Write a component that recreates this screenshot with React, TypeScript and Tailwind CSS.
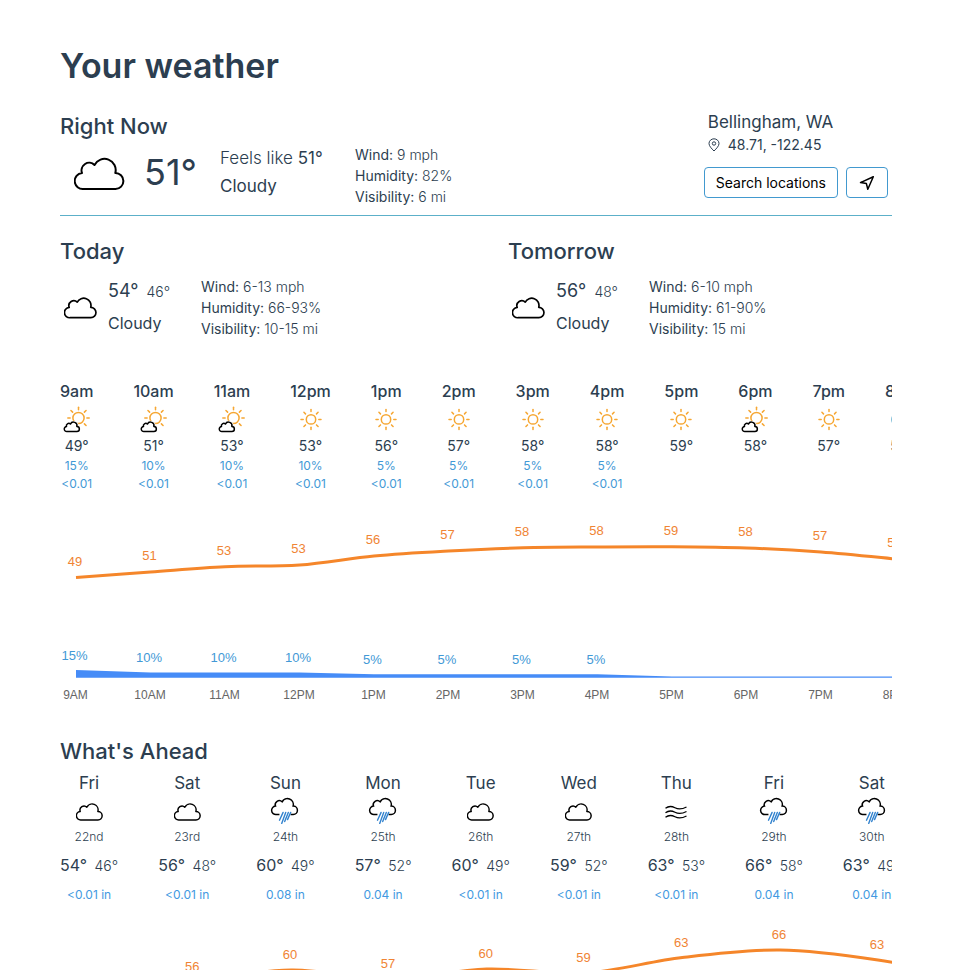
import type { ReactNode } from "react";

type IconKind = "cloudy" | "sunny" | "partly" | "rain" | "wind" | "night";

const CLOUD =
  "M9 32H41A8 8 0 0 0 40.8 16A11.2 11.2 0 0 0 20 8A7.6 7.6 0 0 0 7.5 16A8 8 0 0 0 9 32Z";
const RAY_ANGLES = [0, 45, 90, 135, 180, 225, 270, 315];

function Cloud({ className, stroke = 2 }: { className: string; stroke?: number }) {
  return (
    <svg viewBox="-0.5 0 51 34" className={className} fill="none" stroke="#000" strokeWidth={stroke} strokeLinejoin="round" aria-hidden="true">
      <path d={CLOUD} />
    </svg>
  );
}

function Sun({ cx, cy, r, scale = 1 }: { cx: number; cy: number; r: number; scale?: number }) {
  return (
    <g stroke="#f6a733" strokeWidth="1.5" fill="none" strokeLinecap="round">
      <circle cx={cx} cy={cy} r={r} />
      {RAY_ANGLES.map((a) => (
        <line key={a} x1={cx + 7.8 * scale} y1={cy} x2={cx + 10 * scale} y2={cy} transform={`rotate(${a} ${cx} ${cy})`} />
      ))}
    </g>
  );
}

function Icon({ kind }: { kind: IconKind }) {
  if (kind === "cloudy") return <Cloud className="h-[18px] w-[27px]" stroke={2.8} />;
  return (
    <svg viewBox="0 0 32 32" className="size-8 shrink-0" fill="none" aria-hidden="true">
      {kind === "sunny" && <Sun cx={16} cy={16.4} r={4.7} />}
      {kind === "partly" && (
        <>
          <Sun cx={17.5} cy={15} r={5.6} scale={1.07} />
          <g transform="translate(3.2 18.6) scale(.31)">
            <path d={CLOUD} fill="#fff" stroke="#fff" strokeWidth="9" />
            <path d={CLOUD} fill="#fff" stroke="#000" strokeWidth="4.8" strokeLinejoin="round" />
          </g>
        </>
      )}
      {kind === "rain" && (
        <>
          <path
            transform="translate(2.5 1.6) scale(.53)"
            d="M15 32H9A8 8 0 0 1 7.5 16A7.6 7.6 0 0 1 20 8A11.2 11.2 0 0 1 40.8 16A8 8 0 0 1 41 32H36"
            stroke="#000"
            strokeWidth="2.8"
          />
          <path d="M14.6 16.4 11 24.2M17.2 16.4 13.2 27.4M19.8 16.4 16.2 25.6M22.2 16.4 19 23.6" transform="translate(-.5 0)" stroke="#3182ce" strokeWidth="1.4" strokeLinecap="round" />
        </>
      )}
      {kind === "wind" && (
        <g stroke="#000" strokeWidth="1.3">
          <path d="M5.500 12.2C9 9.6 12 10.2 15 11.8S22 13.4 26.500 11" />
          <path d="M5.500 16.700C9 14.100 12 14.700 15 16.300S22 17.900 26.500 15.500" />
          <path d="M5.500 21.200C9 18.600 12 19.200 15 20.800S22 22.400 26.500 20" />
        </g>
      )}
      {kind === "night" && <path d="M13 8A8.600 8.600 0 1 0 22 21A10 10 0 0 1 13 8Z" stroke="#4ba3c7" strokeWidth="1.500" />}
    </svg>
  );
}

function Stats({ wind, humidity, visibility }: { wind: string; humidity: string; visibility: string }) {
  const rows = [
    ["Wind", wind],
    ["Humidity", humidity],
    ["Visibility", visibility],
  ];
  return (
    <ul className="text-sm leading-[21px]">
      {rows.map(([label, value]) => (
        <li key={label}>
          {label}: <span className="font-light">{value}</span>
        </li>
      ))}
    </ul>
  );
}

function DaySummary(props: { title: string; high: string; low: string; wind: string; humidity: string; visibility: string }) {
  return (
    <section>
      <Heading>{props.title}</Heading>
      <div className="mt-1.5 flex items-center">
        <Cloud className="mt-0.5 ml-1 h-[22px] w-[33px]" stroke={2.6} />
        <div className="ml-[11px] w-[93px] leading-8">
          <p className="text-lg leading-8">
            {props.high}° <span className="ml-[3px] text-sm font-light">{props.low}°</span>
          </p>
          <p>Cloudy</p>
        </div>
        <Stats wind={props.wind} humidity={props.humidity} visibility={props.visibility} />
      </div>
    </section>
  );
}

function Heading({ children }: { children: ReactNode }) {
  return <h2 className="text-[22px] leading-9 font-medium">{children}</h2>;
}

const hours: { time: string; icon: IconKind; temp: number; chance?: number }[] = [
  { time: "9am", icon: "partly", temp: 49, chance: 15 },
  { time: "10am", icon: "partly", temp: 51, chance: 10 },
  { time: "11am", icon: "partly", temp: 53, chance: 10 },
  { time: "12pm", icon: "sunny", temp: 53, chance: 10 },
  { time: "1pm", icon: "sunny", temp: 56, chance: 5 },
  { time: "2pm", icon: "sunny", temp: 57, chance: 5 },
  { time: "3pm", icon: "sunny", temp: 58, chance: 5 },
  { time: "4pm", icon: "sunny", temp: 58, chance: 5 },
  { time: "5pm", icon: "sunny", temp: 59 },
  { time: "6pm", icon: "partly", temp: 58 },
  { time: "7pm", icon: "sunny", temp: 57 },
  { time: "8pm", icon: "night", temp: 55 },
];

const days: { day: string; date: string; icon: IconKind; high: number; low: number; rain: string }[] = [
  { day: "Fri", date: "22nd", icon: "cloudy", high: 54, low: 46, rain: "<0.01" },
  { day: "Sat", date: "23rd", icon: "cloudy", high: 56, low: 48, rain: "<0.01" },
  { day: "Sun", date: "24th", icon: "rain", high: 60, low: 49, rain: "0.08" },
  { day: "Mon", date: "25th", icon: "rain", high: 57, low: 52, rain: "0.04" },
  { day: "Tue", date: "26th", icon: "cloudy", high: 60, low: 49, rain: "<0.01" },
  { day: "Wed", date: "27th", icon: "cloudy", high: 59, low: 52, rain: "<0.01" },
  { day: "Thu", date: "28th", icon: "wind", high: 63, low: 53, rain: "<0.01" },
  { day: "Fri", date: "29th", icon: "rain", high: 66, low: 58, rain: "0.04" },
  { day: "Sat", date: "30th", icon: "rain", high: 63, low: 49, rain: "0.04" },
];

type Point = [number, number];

function smooth(points: Point[]) {
  return points
    .map(([x, y], i) => {
      if (i === 0) return `M${x} ${y}`;
      const [px, py] = points[i - 1];
      const before = points[i - 2] ?? points[i - 1];
      const after = points[i + 1] ?? points[i];
      return `C${px + (x - before[0]) / 6} ${py + (y - before[1]) / 6} ${x - (after[0] - px) / 6} ${y - (after[1] - py) / 6} ${x} ${y}`;
    })
    .join("");
}

const hourX = (i: number) => 16 + i * 74.5;
const hourY = [67.5, 62, 56.7, 55, 46, 41, 37.8, 37, 36.8, 38, 42, 49];
const hourLine = hourY.map((y, i): Point => [hourX(i), y]);
const rainTop = [160, 162.4, 162.4, 162.4, 164.2, 164.2, 164.2, 164.2, 166.4, 166.4, 166.4, 166.4];

const dayX = (i: number) => 35.5 + i * 97.8;
const dayY = [88, 73, 61, 70, 60, 64, 48.5, 41, 51, 70];
const dayLine = dayY.map((y, i): Point => [dayX(i), y]);

function HourlyChart() {
  return (
    <svg width="850" height="200" className="mt-[17px] block max-w-none text-[13px]" fontFamily='"Liberation Sans", Arial, sans-serif' textAnchor="middle" role="img" aria-label="Hourly temperature and chance of rain">
      <path d={`M${rainTop.map((y, i) => `${hourX(i)} ${y}`).join("L")}V167.800H16Z`} fill="#468cf7" />
      <path d={smooth(hourLine)} fill="none" stroke="#f5862a" strokeWidth="3" />
      {hours.map((h, i) => (
        <g key={h.time}>
          <text x={hourX(i) - 1} y={hourY[i] - 12} fill="#f08434">{h.temp}</text>
          {h.chance && <text x={hourX(i) - 1.5} y={rainTop[i] - 10} fill="#4299d6">{h.chance}%</text>}
          <text x={hourX(i) - 0.5} y="189" fill="#666" className="text-xs">{h.time.toUpperCase()}</text>
        </g>
      ))}
    </svg>
  );
}

function DailyChart() {
  return (
    <svg width="850" height="120" className="mt-[5px] block max-w-none text-[13px]" fontFamily='"Liberation Sans", Arial, sans-serif' textAnchor="middle" role="img" aria-label="Daily high temperature">
      <path d={smooth(dayLine)} fill="none" stroke="#f5862a" strokeWidth="3" />
      {days.map((d, i) => (
        <text key={d.date} x={dayX(i) - 1} y={dayY[i] - 11} fill="#f08434">{d.high}</text>
      ))}
    </svg>
  );
}

export default function App() {
  return (
    <main className="bg-white pt-11 pr-[61px] pl-[60px] font-['Inter',sans-serif] text-[#2c3e50]">
      <h1 className="text-[34px] leading-[44px] font-semibold">Your weather</h1>

      <header className="mt-5 flex items-start justify-between border-b border-[#5cb0c9] pb-2">
        <section>
          <Heading>Right Now</Heading>
          <div className="flex items-start">
            <Cloud className="mt-[13px] ml-3.5 h-[34px] w-[51px]" />
            <p className="mt-2 ml-[19px] w-[76px] text-4xl">51°</p>
            <div className="w-[135px] text-[17px] leading-7">
              <p><span className="font-light">Feels like</span> 51°</p>
              <p>Cloudy</p>
            </div>
            <Stats wind="9 mph" humidity="82%" visibility="6 mi" />
          </div>
        </section>
        <aside className="mr-1">
          <p className="ml-1 text-[17px] leading-7">Bellingham, WA</p>
          <p className="ml-1 flex items-center gap-2 text-sm leading-[18px]">
            <svg viewBox="0 0 12 14" className="h-3.5 w-3" fill="none" stroke="#2c3e50" strokeWidth="1" aria-hidden="true">
              <path d="M6 13C3.500 10.500 1 8 1 5.500A5 4.700 0 0 1 11 5.500C11 8 8.500 10.500 6 13Z" />
              <circle cx="6" cy="5.500" r="1.700" />
            </svg>
            48.71, -122.45
          </p>
          <div className="mt-[13px] flex gap-2 text-black">
            <button type="button" className="h-[31px] rounded border border-[#4299cf] px-[11px] text-sm">Search locations</button>
            <button type="button" aria-label="Use my location" className="flex h-[31px] w-[42px] items-center justify-center rounded border border-[#4299cf]">
              <svg viewBox="0 0 16 16" className="size-4" fill="none" stroke="#000" strokeWidth="1.500" strokeLinejoin="round" aria-hidden="true">
                <path d="M14.300 1.700 1.500 7.600 7.400 8.600 8.800 14.300Z" />
              </svg>
            </button>
          </div>
        </aside>
      </header>

      <div className="mt-[17px] grid grid-cols-2 gap-x-16">
        <DaySummary title="Today" high="54" low="46" wind="6-13 mph" humidity="66-93%" visibility="10-15 mi" />
        <DaySummary title="Tomorrow" high="56" low="48" wind="6-10 mph" humidity="61-90%" visibility="15 mi" />
      </div>

      <section className="mt-10 overflow-hidden" aria-label="Hourly forecast">
        <ul className="flex w-max gap-10">
          {hours.map((h) => (
            <li key={h.time} className="flex flex-col items-center text-xs leading-[18px]">
              <h3 className="text-base leading-6 font-medium">{h.time}</h3>
              <div className="-mx-1 flex h-8 items-center">
                <Icon kind={h.icon} />
              </div>
              <p className="text-sm leading-[22px]">{h.temp}°</p>
              {h.chance && (
                <div className="text-center text-[#4299d6]">
                  <p>{h.chance}%</p>
                  <p>&lt;0.01</p>
                </div>
              )}
            </li>
          ))}
        </ul>
        <HourlyChart />
      </section>

      <section className="mt-[23px] overflow-hidden">
        <Heading>What's Ahead</Heading>
        <ul className="flex w-max gap-10">
          {days.map((d) => (
            <li key={d.date} className="flex flex-col items-center text-xs leading-[18px]">
              <h3 className="text-[17px] leading-7">{d.day}</h3>
              <div className="flex h-[31px] items-center pb-0.5">
                <Icon kind={d.icon} />
              </div>
              <p className="font-light">{d.date}</p>
              <p className="mt-[5px] text-base leading-7">
                {d.high}° <span className="ml-[3px] text-sm font-light">{d.low}°</span>
              </p>
              <p className="mt-[7px] text-[#4299e1]">{d.rain} in</p>
            </li>
          ))}
        </ul>
        <DailyChart />
      </section>
    </main>
  );
}
